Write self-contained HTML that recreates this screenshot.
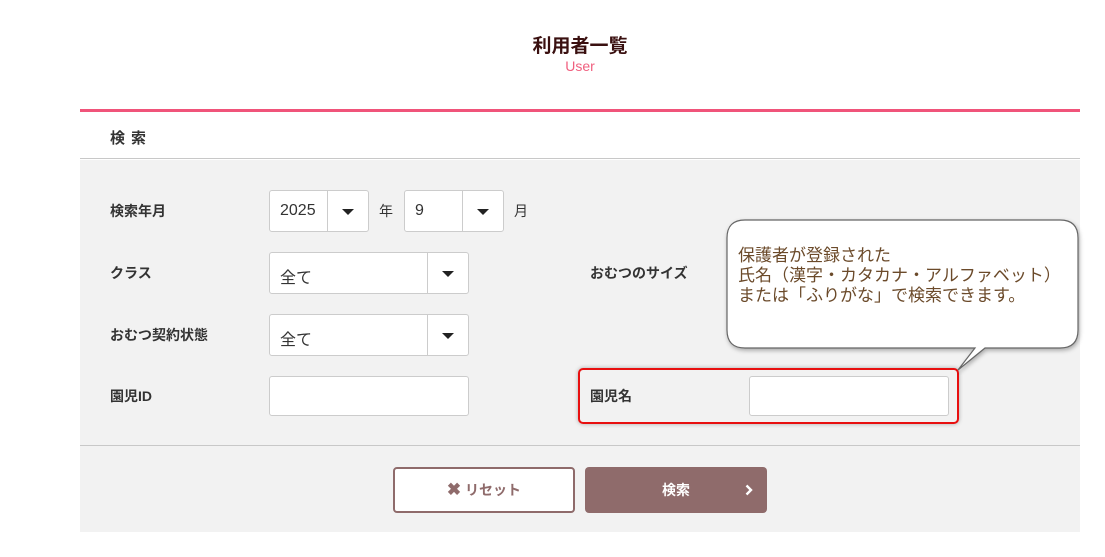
<!DOCTYPE html>
<html><head><meta charset="utf-8"><style>
*{box-sizing:border-box;margin:0;padding:0}
body{width:1105px;height:557px;background:#fff;position:relative;font-family:"Liberation Sans","Noto Sans CJK JP",sans-serif;color:#333;overflow:hidden}
.a{position:absolute}
.lbl{font-size:14px;font-weight:bold;color:#333}
.box{background:#fff;border:1px solid #ccc;border-radius:3px}
.sel .arr{position:absolute;top:0;bottom:0;width:41px;right:0;border-left:1px solid #ccc}
.sel .arr:after{content:"";position:absolute;left:14px;top:18px;border-left:6px solid transparent;border-right:6px solid transparent;border-top:6px solid #222}
.val{font-size:16px;color:#333;position:absolute;left:10px;top:11px}
</style></head><body>
<div class="a" style="left:0;width:1160px;top:31px;text-align:center;font-size:19px;font-weight:bold;color:#3a1010">利用者一覧</div>
<div class="a" style="left:0;width:1160px;top:58px;text-align:center;font-size:14px;color:#f0607f">User</div>
<div class="a" style="left:80px;top:109px;width:1000px;height:3px;background:#f0547a"></div>
<div class="a" style="left:80px;top:112px;width:1000px;height:47px;background:#fff;border-bottom:1px solid #c8c8c8"></div>
<div class="a lbl" style="left:110px;top:127px;letter-spacing:6px;font-size:15px">検索</div>
<div class="a" style="left:80px;top:160px;width:1000px;height:372px;background:#f2f2f2"></div>
<div class="a" style="left:80px;top:445px;width:1000px;height:1px;background:#c8c8c8"></div>

<div class="a lbl" style="left:110px;top:201px">検索年月</div>
<div class="a box sel" style="left:269px;top:190px;width:100px;height:42px"><span class="val">2025</span><div class="arr"></div></div>
<div class="a" style="left:379px;top:201px;font-size:14px">年</div>
<div class="a box sel" style="left:404px;top:190px;width:100px;height:42px"><span class="val">9</span><div class="arr"></div></div>
<div class="a" style="left:514px;top:201px;font-size:14px">月</div>

<div class="a lbl" style="left:110px;top:263px">クラス</div>
<div class="a box sel" style="left:269px;top:252px;width:200px;height:42px"><span class="val">全て</span><div class="arr"></div></div>
<div class="a lbl" style="left:590px;top:263px">おむつのサイズ</div>

<div class="a lbl" style="left:110px;top:325px">おむつ契約状態</div>
<div class="a box sel" style="left:269px;top:314px;width:200px;height:42px"><span class="val">全て</span><div class="arr"></div></div>

<div class="a lbl" style="left:110px;top:386px">園児ID</div>
<div class="a box" style="left:269px;top:376px;width:200px;height:40px"></div>

<div class="a" style="left:578px;top:368px;width:381px;height:56px;border:2px solid #e81010;border-radius:5px;box-shadow:0 0 4px rgba(0,0,0,.3)"></div>
<div class="a lbl" style="left:590px;top:386px">園児名</div>
<div class="a box" style="left:749px;top:376px;width:200px;height:40px"></div>

<svg class="a" style="left:720px;top:215px" width="365" height="160">
<path d="M25 5 H340 Q358 5 358 23 V115 Q358 133 340 133 H265 L238 155 L255 133 H25 Q7 133 7 115 V23 Q7 5 25 5 Z" fill="#fff" stroke="#666" stroke-width="1.2" style="filter:drop-shadow(1px 2px 2px rgba(0,0,0,.3))"/>
</svg>
<div class="a" style="left:738px;top:246px;font-size:17px;line-height:20px;color:#6b4a2a">保護者が登録された<br>氏名（漢字・カタカナ・アルファベット）<br>または「ふりがな」で検索できます。</div>

<div class="a" style="left:393px;top:467px;width:182px;height:46px;background:#fff;border:2px solid #8f6b6b;border-radius:4px;text-align:center;line-height:42px;font-size:14px;font-weight:bold;color:#8f6b6b"><span style="font-size:17px">✖</span> リセット</div>
<div class="a" style="left:585px;top:467px;width:182px;height:46px;background:#8f6b6b;border-radius:4px;text-align:center;line-height:46px;font-size:14px;font-weight:bold;color:#fff">検索<svg style="position:absolute;right:14px;top:17px" width="8" height="12"><path d="M1.5 1.5 L6 6 L1.5 10.5" fill="none" stroke="#fff" stroke-width="2.4"/></svg></div>
</body></html>
